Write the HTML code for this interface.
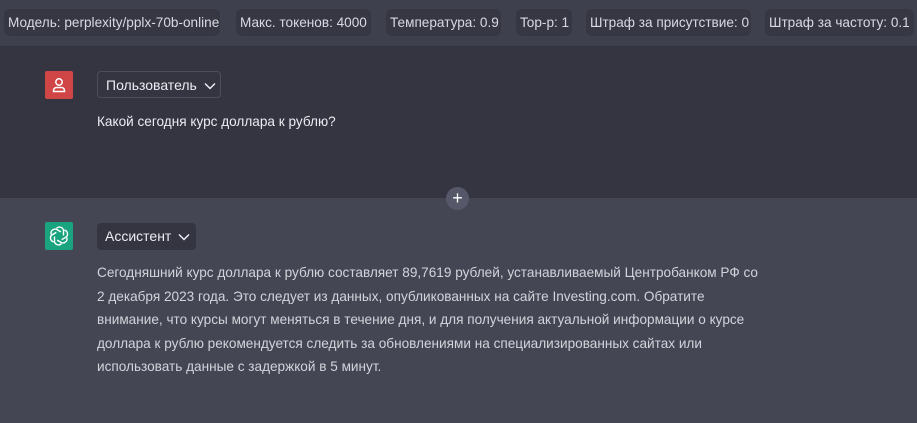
<!DOCTYPE html>
<html><head><meta charset="utf-8"><style>
*{margin:0;padding:0;box-sizing:border-box}
body{width:917px;height:423px;overflow:hidden;background:#444654;font-family:"Liberation Sans",sans-serif;color:#ececf1;position:relative}
.top{position:absolute;left:0;top:0;width:917px;height:46px;background:#3f404d}
.chip{position:absolute;top:9px;height:27px;line-height:27px;background:#363743;border-radius:6px;font-size:13.6px;color:#d9d9e3;padding:0 4px;white-space:nowrap}
.user{position:absolute;left:0;top:46px;width:917px;height:152px;background:#343541}
.av{position:absolute;left:45px;width:28px;height:28px;border-radius:2px}
.dd{position:absolute;left:97px;height:27px;border-radius:4px;font-size:14px;line-height:27px;padding-left:8px;color:#ececf1}
.txt{position:absolute;left:97px;font-size:13.6px;color:#d1d5db;line-height:23.5px}
.plus{position:absolute;left:446px;top:187px;width:23px;height:23px;border-radius:50%;background:#565869;color:#fff;text-align:center;line-height:22px;font-size:18px}
</style></head><body>
<div class="top">
<div class="chip" style="left:4px;width:216px">Модель: perplexity/pplx-70b-online</div>
<div class="chip" style="left:236px;width:135px">Макс. токенов: 4000</div>
<div class="chip" style="left:386px;width:115px">Температура: 0.9</div>
<div class="chip" style="left:516px;width:56px">Top-p: 1</div>
<div class="chip" style="left:586px;width:165px">Штраф за присутствие: 0</div>
<div class="chip" style="left:765px;width:149px">Штраф за частоту: 0.1</div>
</div>
<div class="user">
<div class="av" style="top:25px;background:#d04545">
<svg width="28" height="28" viewBox="0 0 28 28" fill="none" stroke="#fff" stroke-width="1.5"><circle cx="14" cy="11" r="3.2"/><path d="M8.5 20.5v-1a3 3 0 0 1 3-3h5a3 3 0 0 1 3 3v1z"/></svg></div>
<div class="dd" style="top:25px;width:124px;border:1px solid #4d4e5a">Пользователь <svg width="12" height="8" viewBox="0 0 12 8" style="margin-left:3px"><path d="M1 1.5l5 5 5-5" stroke="#ececf1" stroke-width="1.5" fill="none"/></svg></div>
<div class="txt" style="top:64px;color:#ececf1">Какой сегодня курс доллара к рублю?</div>
</div>
<div class="plus">+</div>
<div class="av" style="top:222px;background:#19a37f">
<svg width="28" height="28" viewBox="0 0 28 28" fill="none" stroke="#fff" stroke-width="1.4"><g transform="translate(14 14)"><g id="p"><path d="M-2.5 -7.5a4 4 0 0 1 7 2v5"/></g><use href="#p" transform="rotate(60)"/><use href="#p" transform="rotate(120)"/><use href="#p" transform="rotate(180)"/><use href="#p" transform="rotate(240)"/><use href="#p" transform="rotate(300)"/></g></svg></div>
<div class="dd" style="top:223px;width:99px;background:#343541">Ассистент <svg width="12" height="8" viewBox="0 0 12 8" style="margin-left:3px"><path d="M1 1.5l5 5 5-5" stroke="#ececf1" stroke-width="1.5" fill="none"/></svg></div>
<div class="txt" style="top:261px">Сегодняшний курс доллара к рублю составляет 89,7619 рублей, устанавливаемый Центробанком РФ со<br>2 декабря 2023 года. Это следует из данных, опубликованных на сайте Investing.com. Обратите<br>внимание, что курсы могут меняться в течение дня, и для получения актуальной информации о курсе<br>доллара к рублю рекомендуется следить за обновлениями на специализированных сайтах или<br>использовать данные с задержкой в 5 минут.</div>
</body></html>
